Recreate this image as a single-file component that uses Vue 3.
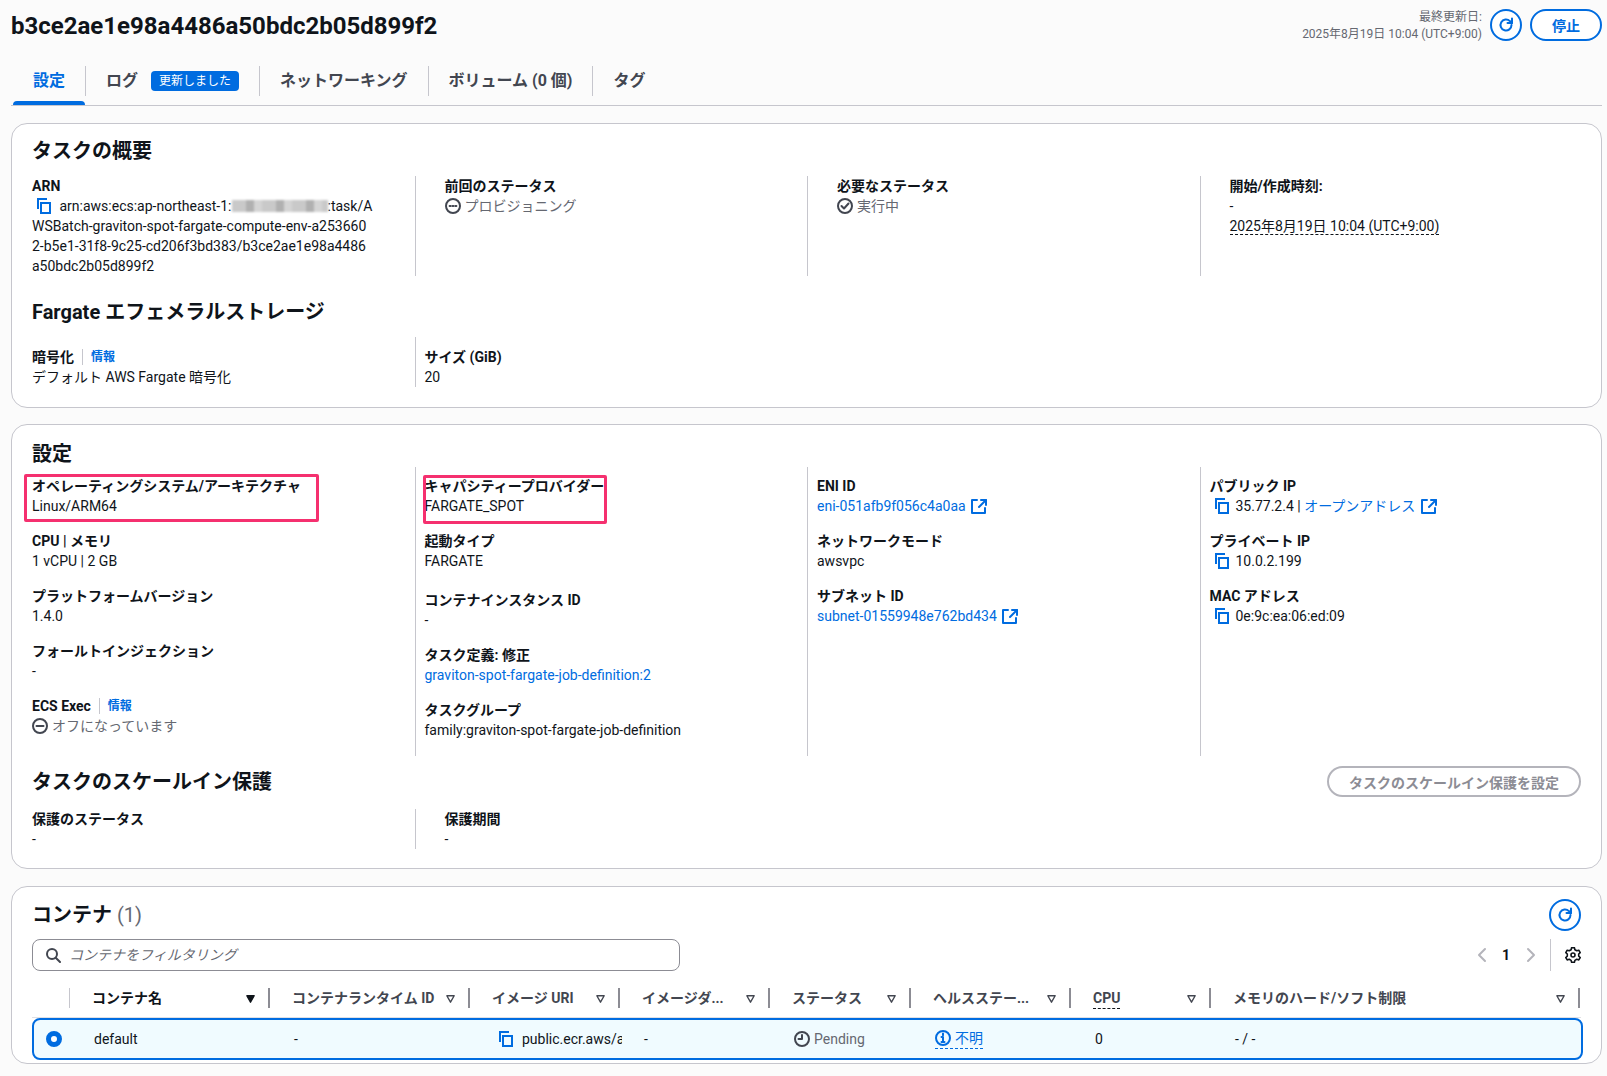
<script setup>
const col1 = [
  { l: 'CPU | メモリ', v: '1 vCPU | 2 GB' },
  { l: 'プラットフォームバージョン', v: '1.4.0' },
  { l: 'フォールトインジェクション', v: '-' },
]
const headers = [
  { t: '', w: 38 },
  { t: 'コンテナ名', sorted: true },
  { t: 'コンテナランタイム ID' },
  { t: 'イメージ URI' },
  { t: 'イメージダ...' },
  { t: 'ステータス' },
  { t: 'ヘルスステー...' },
  { t: 'CPU', dashed: true },
  { t: 'メモリのハード/ソフト制限' },
]
</script>

<template>
  <div class="page">
    <header class="top">
      <h1>b3ce2ae1e98a4486a50bdc2b05d899f2</h1>
      <div class="top-right">
        <div class="updated"><div>最終更新日:</div><div>2025年8月19日 10:04 (UTC+9:00)</div></div>
        <button class="circle-btn">
          <svg viewBox="0 0 16 16" class="i16"><path d="M13.5 8a5.5 5.5 0 1 1-1.6-3.9L14 6" /><path d="M14 1.5V6H9.5" /></svg>
        </button>
        <button class="stop">停止</button>
      </div>
    </header>

    <nav class="tabs">
      <div class="tab active"><span>設定</span></div>
      <div class="tab"><span>ログ</span><span class="badge">更新しました</span></div>
      <div class="tab"><span>ネットワーキング</span></div>
      <div class="tab"><span>ボリューム (0 個)</span></div>
      <div class="tab last"><span>タグ</span></div>
    </nav>

    <section class="card c1">
      <h2>タスクの概要</h2>
      <div class="cols wide">
        <div class="col">
          <div class="lb">ARN</div>
          <div class="arn">
            <svg viewBox="0 0 16 16" class="i16 copy"><path d="M2 11V1h9" /><path d="M5 5h9v10H5z" /></svg>
            arn:aws:ecs:ap-northeast-1:<span class="blur"></span>:task/A<br />WSBatch-graviton-spot-fargate-compute-env-a253660<br />2-b5e1-31f8-9c25-cd206f3bd383/b3ce2ae1e98a4486<br />a50bdc2b05d899f2
          </div>
        </div>
        <div class="col">
          <div class="lb">前回のステータス</div>
          <div class="st">
            <svg viewBox="0 0 16 16" class="i16 gray"><circle cx="8" cy="8" r="7" /><path d="M4.6 8h1M7.5 8h1M10.4 8h1" /></svg>プロビジョニング
          </div>
        </div>
        <div class="col">
          <div class="lb">必要なステータス</div>
          <div class="st">
            <svg viewBox="0 0 16 16" class="i16 gray"><circle cx="8" cy="8" r="7" /><path d="M4.5 8l2.5 2.5 4.5-5" /></svg>実行中
          </div>
        </div>
        <div class="col">
          <div class="lb">開始/作成時刻:</div>
          <div>-</div>
          <div><span class="dash">2025年8月19日 10:04 (UTC+9:00)</span></div>
        </div>
      </div>

      <h2 class="fargate">Fargate エフェメラルストレージ</h2>
      <div class="cols narrow pad10">
        <div class="col">
          <div class="lb">暗号化<span class="sep"></span><a class="info">情報</a></div>
          <div>デフォルト AWS Fargate 暗号化</div>
        </div>
        <div class="col">
          <div class="lb">サイズ (GiB)</div>
          <div>20</div>
        </div>
      </div>
    </section>

    <section class="card c2">
      <h2>設定</h2>
      <div class="cols narrow conf">
        <div class="col stack">
          <div class="item hl hl1">
            <div class="lb">オペレーティングシステム/アーキテクチャ</div>
            <div>Linux/ARM64</div>
          </div>
          <div v-for="x in col1" :key="x.l" class="item">
            <div class="lb">{{ x.l }}</div>
            <div>{{ x.v }}</div>
          </div>
          <div class="item">
            <div class="lb">ECS Exec<span class="sep"></span><a class="info">情報</a></div>
            <div class="st">
              <svg viewBox="0 0 16 16" class="i16 gray"><circle cx="8" cy="8" r="7" /><path d="M4.5 8h7" /></svg>オフになっています
            </div>
          </div>
        </div>
        <div class="col stack">
          <div class="item hl hl2">
            <div class="lb">キャパシティープロバイダー</div>
            <div>FARGATE_SPOT</div>
          </div>
          <div class="item">
            <div class="lb">起動タイプ</div>
            <div>FARGATE</div>
          </div>
          <div class="item push">
            <div class="lb">コンテナインスタンス ID</div>
            <div>-</div>
          </div>
          <div class="item">
            <div class="lb">タスク定義: 修正</div>
            <div><a class="link">graviton-spot-fargate-job-definition:2</a></div>
          </div>
          <div class="item">
            <div class="lb">タスクグループ</div>
            <div>family:graviton-spot-fargate-job-definition</div>
          </div>
        </div>
        <div class="col stack">
          <div class="item">
            <div class="lb">ENI ID</div>
            <div class="withext"><a class="link">eni-051afb9f056c4a0aa</a>
              <svg viewBox="0 0 16 16" class="i16 ext"><path d="M10 2H15V7" /><path d="M15 2L8 9" /><path d="M6 2H1v13h13v-5" /></svg>
            </div>
          </div>
          <div class="item">
            <div class="lb">ネットワークモード</div>
            <div>awsvpc</div>
          </div>
          <div class="item">
            <div class="lb">サブネット ID</div>
            <div class="withext"><a class="link">subnet-01559948e762bd434</a>
              <svg viewBox="0 0 16 16" class="i16 ext"><path d="M10 2H15V7" /><path d="M15 2L8 9" /><path d="M6 2H1v13h13v-5" /></svg>
            </div>
          </div>
        </div>
        <div class="col stack">
          <div class="item">
            <div class="lb">パブリック IP</div>
            <div class="cp">
              <svg viewBox="0 0 16 16" class="i16 copy"><path d="M2 11V1h9" /><path d="M5 5h9v10H5z" /></svg>
              <span>35.77.2.4 | <a class="link">オープンアドレス</a></span>
              <svg viewBox="0 0 16 16" class="i16 ext"><path d="M10 2H15V7" /><path d="M15 2L8 9" /><path d="M6 2H1v13h13v-5" /></svg>
            </div>
          </div>
          <div class="item">
            <div class="lb">プライベート IP</div>
            <div class="cp">
              <svg viewBox="0 0 16 16" class="i16 copy"><path d="M2 11V1h9" /><path d="M5 5h9v10H5z" /></svg>
              <span>10.0.2.199</span>
            </div>
          </div>
          <div class="item">
            <div class="lb">MAC アドレス</div>
            <div class="cp">
              <svg viewBox="0 0 16 16" class="i16 copy"><path d="M2 11V1h9" /><path d="M5 5h9v10H5z" /></svg>
              <span>0e:9c:ea:06:ed:09</span>
            </div>
          </div>
        </div>
      </div>

      <div class="scale-head">
        <h2>タスクのスケールイン保護</h2>
        <button class="disabled">タスクのスケールイン保護を設定</button>
      </div>
      <div class="cols wide scale">
        <div class="col">
          <div class="lb">保護のステータス</div>
          <div>-</div>
        </div>
        <div class="col">
          <div class="lb">保護期間</div>
          <div>-</div>
        </div>
      </div>
    </section>

    <section class="card c3">
      <div class="c3-head">
        <h2>コンテナ <span class="count">(1)</span></h2>
        <button class="circle-btn">
          <svg viewBox="0 0 16 16" class="i16"><path d="M13.5 8a5.5 5.5 0 1 1-1.6-3.9L14 6" /><path d="M14 1.5V6H9.5" /></svg>
        </button>
      </div>
      <div class="tools">
        <div class="search">
          <svg viewBox="0 0 16 16" class="i16 gray"><circle cx="7" cy="7" r="5" /><path d="M10.7 10.7L15 15" /></svg>
          <span>コンテナをフィルタリング</span>
        </div>
        <div class="pager">
          <svg viewBox="0 0 16 16" class="i16 off"><path d="M11 2L5 8l6 6" /></svg>
          <b>1</b>
          <svg viewBox="0 0 16 16" class="i16 off"><path d="M5 2l6 6-6 6" /></svg>
          <span class="vr"></span>
          <svg viewBox="0 0 16 16" class="i16 cog"><path d="M6.6 1.2h2.8l.5 2 1.9 1.1 2-.6 1.4 2.4-1.5 1.4v2.1l1.5 1.4-1.4 2.4-2-.6-1.9 1.1-.5 2H6.6l-.5-2-1.9-1.1-2 .6L.8 11l1.5-1.4V7.5L.8 6.1l1.4-2.4 2 .6 1.9-1.1z" transform="translate(0 -.5)" /><circle cx="8" cy="8" r="2" /></svg>
        </div>
      </div>
      <div class="thead">
        <div v-for="(h, i) in headers" :key="i" class="th">
          <template v-if="i > 0">
            <span :class="{ dash: h.dashed }">{{ h.t }}</span>
            <svg viewBox="0 0 12 12" class="sort" :class="{ on: h.sorted }"><path d="M2 3h8L6 10z" /></svg>
          </template>
        </div>
      </div>
      <div class="row">
        <div class="td radio"><span></span></div>
        <div class="td">default</div>
        <div class="td">-</div>
        <div class="td uri">
          <svg viewBox="0 0 16 16" class="i16 copy"><path d="M2 11V1h9" /><path d="M5 5h9v10H5z" /></svg>
          <span>public.ecr.aws/a</span>
        </div>
        <div class="td">-</div>
        <div class="td pend">
          <svg viewBox="0 0 16 16" class="i16 gray"><circle cx="8" cy="8" r="7" /><path d="M8 4v4H4.5" /></svg>Pending
        </div>
        <div class="td">
          <span class="health">
            <svg viewBox="0 0 16 16" class="i16 ext"><circle cx="8" cy="8" r="7" /><path d="M8 7v5M6.5 12h3M6.5 7H8M8 3.6v1.6" /></svg>不明
          </span>
        </div>
        <div class="td">0</div>
        <div class="td">- / -</div>
      </div>
    </section>
  </div>
</template>

<style>
html, body { background: #fbfbfb; }
</style>

<style scoped>
.page {
  width: 1607px;
  height: 1076px;
  box-sizing: border-box;
  padding: 0 5px 0 11px;
  overflow: hidden;
  background: #fbfbfb;
  color: #0f141a;
  font: 14px/20px Roboto, "Noto Sans CJK JP", sans-serif;
}
h1, h2 { margin: 0; font-weight: 700; }
a { color: #006ce0; }
button { font-family: inherit; background: #fff; }
svg { fill: none; stroke-linecap: round; stroke-linejoin: round; stroke-width: 2; flex: none; }
.i16 { width: 16px; height: 16px; stroke: #006ce0; }
.gray { stroke: #424650; }
.off { stroke: #b4b4bb; }
.cog { stroke: #0f141a; stroke-width: 1.6; }
.copy { stroke-linecap: butt; stroke-linejoin: miter; }
.ext { stroke: #006ce0; }

.top { display: flex; justify-content: space-between; height: 53px; padding-top: 9px; box-sizing: border-box; }
h1 { font-size: 24px; line-height: 34px; margin-top: 0; }
.top-right { display: flex; align-items: flex-start; }
.updated { font-size: 12px; line-height: 17px; color: #656871; text-align: right; margin-right: 8px; }
.circle-btn { width: 32px; height: 32px; padding: 0; border: 2px solid #006ce0; border-radius: 50%; display: flex; align-items: center; justify-content: center; }
.stop { width: 72px; height: 32px; padding: 0; margin-left: 8px; border: 2px solid #006ce0; border-radius: 20px; color: #006ce0; font-weight: 700; font-size: 14px; }

.tabs { display: flex; height: 53px; border-bottom: 1px solid #c6c6cd; padding: 13px 0 0 2px; box-sizing: border-box; height: 53px; }
.tab { height: 30px; display: flex; align-items: center; gap: 13px; padding: 0 20px; border-right: 1px solid #c6c6cd; font-size: 16px; font-weight: 700; color: #424650; position: relative; }
.tab.last { border-right: 0; }
.tab.active { color: #006ce0; }
.tab.active::after { content: ""; position: absolute; left: 0; right: 0; bottom: -9px; height: 4px; background: #006ce0; border-radius: 4px 4px 0 0; }
.badge { height: 20px; padding: 0 8px; border-radius: 4px; background: #006ce0; color: #fff; font-size: 12px; line-height: 20px; font-weight: 400; }

.card { background: #fff; border: 1px solid #c6c6cd; border-radius: 16px; box-sizing: border-box; padding: 0 20px; }
.c1 { margin-top: 17px; height: 285px; }
.c2 { margin-top: 16px; height: 445px; }
.c3 { margin-top: 17px; height: 178px; }
h2 { font-size: 20px; line-height: 24px; }
.c1 > h2:first-child { padding-top: 15px; margin-bottom: 13px; }
.fargate { margin-top: 24px; margin-bottom: 13px; }
.c2 > h2:first-child { padding-top: 17px; margin-bottom: 1px; }

.cols { display: grid; grid-template-columns: repeat(4, 392.5px); margin-left: -10px; }
.col { border-left: 1px solid #c6c6cd; box-sizing: border-box; }
.col:first-child { border-left: 0; padding-left: 10px !important; }
.wide .col { padding-left: 29px; }
.narrow .col { padding-left: 9px; }
.pad10 .col { padding-top: 10px; }
.c1 .wide { height: 100px; }
.pad10 { height: 50px; }
.lb { font-weight: 700; display: flex; align-items: center; }
.sep { width: 1px; height: 16px; background: #c6c6cd; margin: 0 8px; }
.info { font-size: 12px; font-weight: 700; }
.link { color: #006ce0; }
.arn .copy { vertical-align: -3px; margin: 0 4px 0 4px; }
.blur { display: inline-block; width: 96px; height: 12px; vertical-align: -1px; background: repeating-linear-gradient(90deg, #c9c9c9 0 14px, #b0b0b0 14px 22px, #d4d4d4 22px 30px); filter: blur(1px); }
.st { display: flex; align-items: center; gap: 4px; color: #656871; }
.dash { border-bottom: 1px dashed #0f141a; }

.conf { height: 289px; padding-top: 9px; box-sizing: border-box; }
.conf .col { margin-top: -9px; padding-top: 9px; }
.stack { display: flex; flex-direction: column; gap: 15px; }
.item { position: relative; }
.push { margin-top: 4px; }
.hl::after { content: ""; position: absolute; border: 3px solid #f5306f; border-radius: 2px; pointer-events: none; }
.hl1::after { left: -8px; top: -2px; width: 289px; height: 42px; }
.hl2::after { left: -2px; top: -1px; width: 178px; height: 43px; }
.withext, .cp { display: flex; align-items: center; gap: 5px; }
.cp { padding-left: 4px; gap: 6px; }

.scale-head { display: flex; justify-content: space-between; align-items: center; margin-top: 10px; height: 31px; }
.disabled { width: 254px; height: 31px; border: 2px solid #b4b4bb; border-radius: 20px; color: #8c8c94; font-weight: 700; font-size: 14px; padding: 0; }
.scale { margin-top: 12px; height: 40px; }

.c3-head { display: flex; justify-content: space-between; align-items: center; padding-top: 12px; height: 44px; box-sizing: border-box; }
.count { font-weight: 400; color: #656871; }
.tools { display: flex; justify-content: space-between; align-items: center; margin-top: 8px; height: 32px; }
.search { width: 648px; height: 32px; box-sizing: border-box; border: 1px solid #8c8c94; border-radius: 8px; display: flex; align-items: center; gap: 8px; padding-left: 12px; color: #656871; font-style: italic; }
.pager { display: flex; align-items: center; height: 32px; }
.pager b { margin: 0 13px 0 12px; font-weight: 700; }
.vr { width: 1px; height: 32px; background: #c6c6cd; margin: 0 14px 0 11px; }
.thead, .row { display: grid; grid-template-columns: 38px 200px 200px 150px 150px 141px 160px 140px 369px; }
.thead { margin-top: 17px; height: 20px; padding-bottom: 9px; border-bottom: 1px solid #e0e0e4; box-sizing: content-box; }
.th { display: flex; justify-content: space-between; align-items: center; height: 20px; padding: 0 12px 0 22px; border-right: 2px solid #8c8c94; box-sizing: border-box; font-weight: 700; color: #424650; }
.th:first-child { border-right: 1px solid #c6c6cd; }
.th:nth-child(2) { color: #0f141a; }
.sort { width: 11px; height: 11px; stroke: #424650; stroke-width: 1.5; }
.sort.on { fill: #0f141a; stroke: #0f141a; }
.row { height: 42px; box-sizing: border-box; border: 2px solid #006ce0; border-radius: 8px; background: #f0fbff; margin-top: 0; align-items: center; margin-right: -2px; }
.td { padding-left: 22px; white-space: nowrap; overflow: hidden; }
.radio { padding-left: 12px; }
.radio span { display: block; width: 16px; height: 16px; border-radius: 50%; background: #fff; border: 5px solid #006ce0; box-sizing: border-box; }
.uri { display: flex; align-items: center; gap: 8px; padding-left: 26px; }
.pend { display: flex; align-items: center; gap: 4px; color: #656871; }
.health { display: inline-flex; align-items: center; gap: 4px; color: #006ce0; border-bottom: 1px dashed #006ce0; }
</style>
